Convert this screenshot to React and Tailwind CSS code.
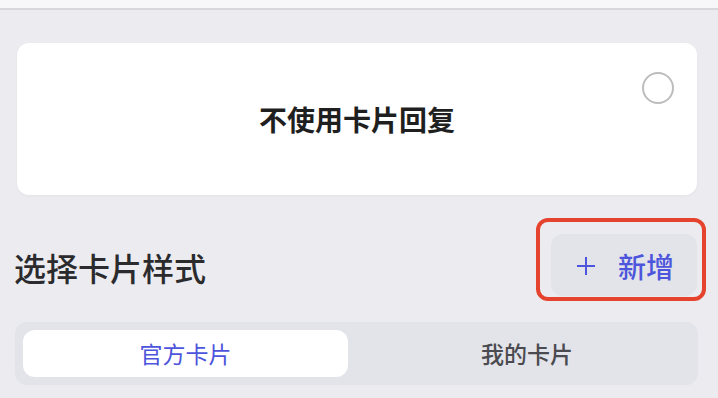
export default function App() {
  const font = { fontFamily: '"Noto Sans CJK SC", "Noto Sans", sans-serif' };
  return (
    <div className="w-[718px] h-[398px] overflow-hidden bg-[#ebebf0] relative" style={font}>
      <div className="h-[8px] bg-[#f7f7f9] border-b-2 border-[#d8d8dc] box-content" />
      <div className="ml-[17px] mr-[21px] mt-[33px] h-[152px] bg-white rounded-[12px] shadow-[0_1px_3px_rgba(0,0,0,0.04)] relative flex items-center justify-center">
        <span className="text-[28px] font-semibold text-[#1f1f1f] leading-none">不使用卡片回复</span>
        <div className="absolute left-[625px] top-[29px] w-[32px] h-[32px] rounded-full border-2 border-[#bdbdc0]" />
      </div>
      <div className="mt-[39px] ml-[14px] mr-[21px] flex items-center justify-between h-[62px]">
        <span className="text-[32px] font-medium text-[#2b2b2e] leading-none pt-[4px]">选择卡片样式</span>
        <div className="w-[146px] h-[62px] rounded-[12px] bg-[#e3e4e9] flex items-center justify-center gap-[22px] pl-[2px] pt-[2px]">
          <svg width="20" height="20" viewBox="0 0 20 20" className="text-[#4d55dc]">
            <path d="M10 1v18M1 10h18" stroke="currentColor" strokeWidth="2" fill="none" />
          </svg>
          <span className="text-[28px] font-medium text-[#4d55dc] leading-none">新增</span>
        </div>
      </div>
      <div className="absolute left-[536px] top-[218px] w-[170px] h-[83px] rounded-[12px] border-[4px] border-[#e5432d]" />
      <div className="mt-[26px] ml-[15px] mr-[20px] h-[63px] rounded-[12px] bg-[#e3e4e9] p-[8px] flex">
        <div className="w-[325px] h-[47px] rounded-[12px] bg-white flex items-center justify-center">
          <span className="text-[23px] text-[#4d55dc] leading-none">官方卡片</span>
        </div>
        <div className="flex-1 pl-[16px] flex items-center justify-center">
          <span className="text-[23px] font-medium text-[#4a4a50] leading-none">我的卡片</span>
        </div>
      </div>
    </div>
  );
}
